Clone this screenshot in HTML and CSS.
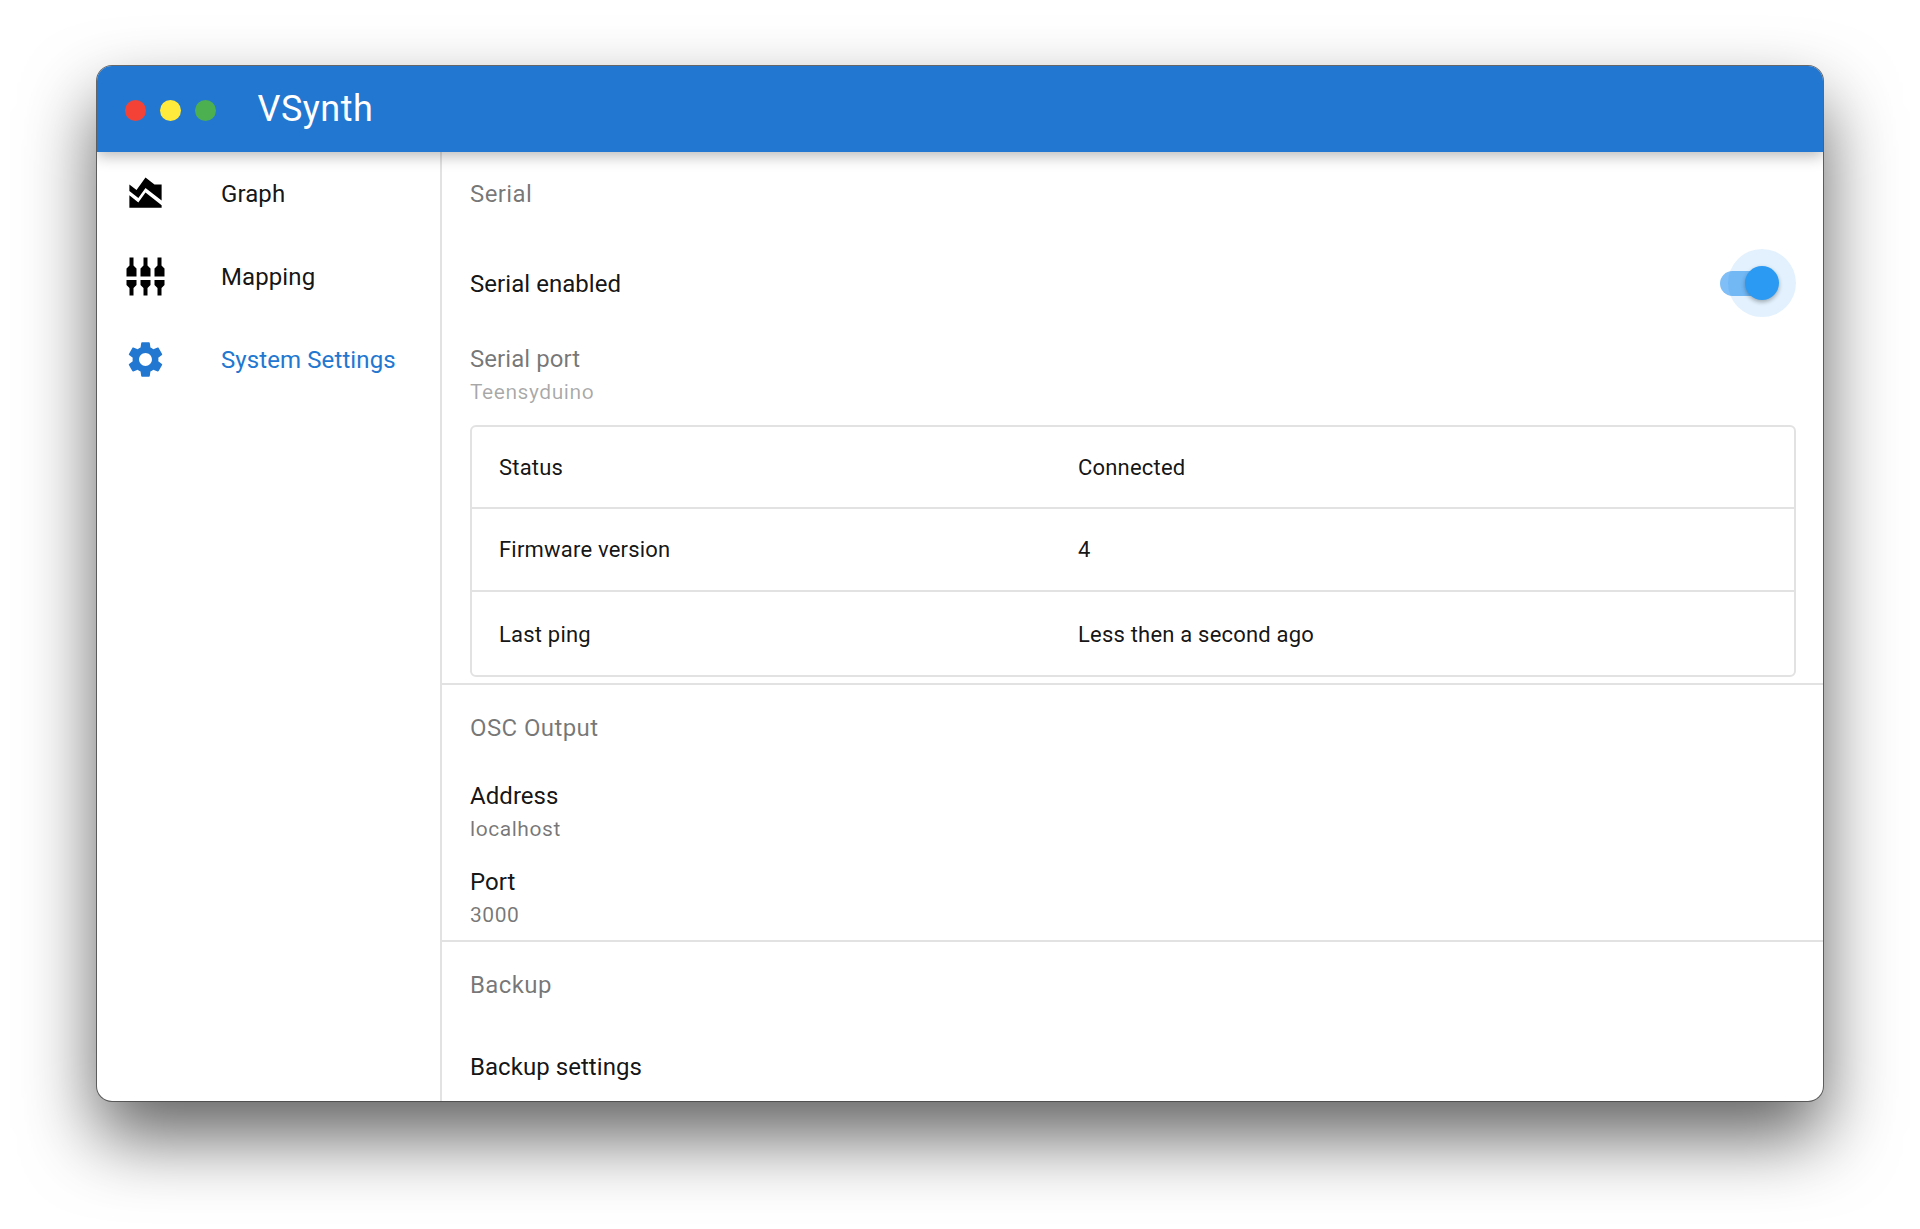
FILE: index.html
```html
<!DOCTYPE html>
<html lang="en">
<head>
<meta charset="utf-8">
<title>VSynth</title>
<link rel="stylesheet" href="styles.css">
</head>
<body>
<div class="window">
  <header class="titlebar">
    <div class="lights">
      <span class="light red"></span>
      <span class="light yellow"></span>
      <span class="light green"></span>
    </div>
    <h1 class="app-title">VSynth</h1>
  </header>
  <div class="body-row">
    <nav class="sidebar">
      <a class="nav-item">
        <svg class="nav-icon" viewBox="0 0 24 24"><path d="M3 13v7h18v-1.5l-9-7L8 17l-5-4zm0-6l4 3 5-7 5 4h4v8.97l-9-7-4 5.6-5-4V7z"/></svg>
        <span>Graph</span>
      </a>
      <a class="nav-item">
        <svg class="nav-icon" viewBox="0 0 43 43"><path d="M5.500 2.500h4v8l3 3v8h-10v-8l3-3zM2.500 25h10v5l-3 3v7.500h-4V33l-3-3zM19.500 2.500h4v8l3 3v8h-10v-8l3-3zM16.500 25h10v5l-3 3v7.500h-4V33l-3-3zM33.500 2.500h4v8l3 3v8h-10v-8l3-3zM30.500 25h10v5l-3 3v7.500h-4V33l-3-3z"/></svg>
        <span>Mapping</span>
      </a>
      <a class="nav-item active">
        <svg class="nav-icon" viewBox="0 0 24 24"><path d="M19.14,12.94c0.04-0.3,0.06-0.61,0.06-0.94c0-0.32-0.02-0.64-0.07-0.94l2.03-1.58c0.18-0.14,0.23-0.41,0.12-0.61 l-1.92-3.32c-0.12-0.22-0.37-0.29-0.59-0.22l-2.39,0.96c-0.5-0.38-1.03-0.7-1.62-0.94L14.4,2.81c-0.04-0.24-0.24-0.41-0.48-0.41 h-3.84c-0.24,0-0.43,0.17-0.47,0.41L9.25,5.35C8.66,5.59,8.12,5.92,7.63,6.29L5.24,5.33c-0.22-0.08-0.47,0-0.59,0.22L2.74,8.87 C2.62,9.08,2.66,9.34,2.86,9.48l2.03,1.58C4.84,11.36,4.8,11.69,4.8,12s0.02,0.64,0.07,0.94l-2.03,1.58 c-0.18,0.14-0.23,0.41-0.12,0.61l1.92,3.32c0.12,0.22,0.37,0.29,0.59,0.22l2.39-0.96c0.5,0.38,1.03,0.7,1.62,0.94l0.36,2.54 c0.05,0.24,0.24,0.41,0.48,0.41h3.84c0.24,0,0.44-0.17,0.47-0.41l0.36-2.54c0.59-0.24,1.13-0.56,1.62-0.94l2.39,0.96 c0.22,0.08,0.47,0,0.59-0.22l1.92-3.32c0.12-0.22,0.07-0.47-0.12-0.61L19.14,12.94z M12,15.6c-1.98,0-3.6-1.62-3.6-3.6 s1.62-3.6,3.6-3.6s3.6,1.62,3.6,3.6S13.98,15.6,12,15.6z"/></svg>
        <span>System Settings</span>
      </a>
    </nav>
    <main class="content">
      <section class="section serial">
        <h2 class="section-title">Serial</h2>
        <div class="row-switch">
          <span class="label">Serial enabled</span>
          <div class="switch"><span class="track"></span><span class="halo"></span><span class="thumb"></span></div>
        </div>
        <div class="field disabled">
          <div class="label">Serial port</div>
          <div class="sub">Teensyduino</div>
        </div>
        <div class="info-table">
          <div class="info-row"><span>Status</span><span>Connected</span></div>
          <div class="info-row"><span>Firmware version</span><span>4</span></div>
          <div class="info-row"><span>Last ping</span><span>Less then a second ago</span></div>
        </div>
      </section>
      <section class="section osc">
        <h2 class="section-title">OSC Output</h2>
        <div class="field first">
          <div class="label">Address</div>
          <div class="sub">localhost</div>
        </div>
        <div class="field">
          <div class="label">Port</div>
          <div class="sub">3000</div>
        </div>
      </section>
      <section class="section backup">
        <h2 class="section-title">Backup</h2>
        <div class="row-plain"><span class="label">Backup settings</span></div>
      </section>
    </main>
  </div>
</div>
</body>
</html>
```
FILE: styles.css
```css
* { box-sizing: border-box; }
html, body { margin: 0; height: 100%; }
body {
  background: #fff;
  font-family: Roboto, "Liberation Sans", sans-serif;
  color: rgba(0,0,0,.93);
  overflow: hidden;
  padding: 66px 97px 0;
}
.window {
  width: 1726px;
  height: 1035px;
  border-radius: 15px;
  background: #fff;
  overflow: clip;
  display: flex;
  flex-direction: column;
  box-shadow: 0 0 0 1px rgba(70,70,70,.8), 0 36px 72px rgba(0,0,0,.62);
}
.titlebar {
  flex: 0 0 86px;
  background: #2277d1;
  display: flex;
  align-items: center;
  padding-left: 27.500px;
  box-shadow: 0 4px 14px rgba(0,0,0,.28);
  position: relative;
  z-index: 2;
}
.lights { display: flex; gap: 14px; width: 133px; padding-top: 3px; }
.light { width: 21px; height: 21px; border-radius: 50%; }
.red { background: #f44336; }
.yellow { background: #ffeb3b; }
.green { background: #4caf50; }
.app-title { margin: 0; font-size: 36px; font-weight: 400; color: #fff; letter-spacing: .5px; line-height: 1; }
.body-row { flex: 1; display: flex; min-height: 0; }
.sidebar {
  flex: 0 0 345px;
  border-right: 2px solid #e2e2e2;
}
.nav-item {
  display: flex;
  align-items: center;
  height: 83px;
  padding-left: 26.500px;
  font-size: 24px;
  letter-spacing: .1px;
}
.nav-icon { width: 43px; height: 43px; margin-right: 54.500px; fill: #000; flex: none; }
.nav-item.active { color: #2277d1; }
.nav-item.active .nav-icon { fill: #2277d1; }
.content { flex: 1; min-width: 0; }
.section { padding: 0 27px 0 28px; border-bottom: 2px solid #e2e2e2; }
.section:last-child { border-bottom: 0; }
.serial { height: 533px; }
.osc { height: 257px; }
.section-title {
  margin: 0;
  height: 83px;
  display: flex;
  align-items: center;
  font-size: 24px;
  font-weight: 400;
  color: rgba(0,0,0,.54);
  letter-spacing: .4px;
}
.osc .section-title, .backup .section-title { height: 85px; }
.label { font-size: 24px; letter-spacing: .05px; line-height: 32px; }
.sub { font-size: 21px; letter-spacing: .55px; line-height: 30px; color: rgba(0,0,0,.54); margin-top: 2px; }
.row-switch {
  height: 96px;
  display: flex;
  align-items: center;
  justify-content: space-between;
}
.row-switch .label { padding-top: 2px; }
.switch { position: relative; width: 76px; height: 68px; }
.track { position: absolute; left: 0; top: 22px; width: 50px; height: 25px; border-radius: 13px; background: #7fbef6; }
.halo { position: absolute; right: 0; top: 0; width: 68px; height: 68px; border-radius: 50%; background: rgba(33,150,243,.13); }
.thumb { position: absolute; right: 17px; top: 17px; width: 34px; height: 34px; border-radius: 50%; background: #2b9af3; box-shadow: 0 2px 4px rgba(0,0,0,.3); }
.field { height: 85px; padding-top: 12px; }
.field.first { padding-top: 11px; margin-top: -1px; }
.disabled { height: 94px; padding-top: 12px; }
.disabled .label { color: rgba(0,0,0,.54); }
.disabled .sub { color: rgba(0,0,0,.34); }
.info-table {
  border: 2px solid #e2e2e2;
  border-radius: 6px;
}
.info-row {
  height: 83px;
  display: grid;
  grid-template-columns: 579px 1fr;
  align-items: center;
  padding-left: 27px;
  border-bottom: 2px solid #e2e2e2;
  font-size: 22px;
  letter-spacing: .2px;
}
.info-row:first-child { height: 82px; }
.info-row:last-child { border-bottom: 0; padding-top: 2px; }
.row-plain { height: 78px; display: flex; align-items: center; margin-top: 1px; }
```
